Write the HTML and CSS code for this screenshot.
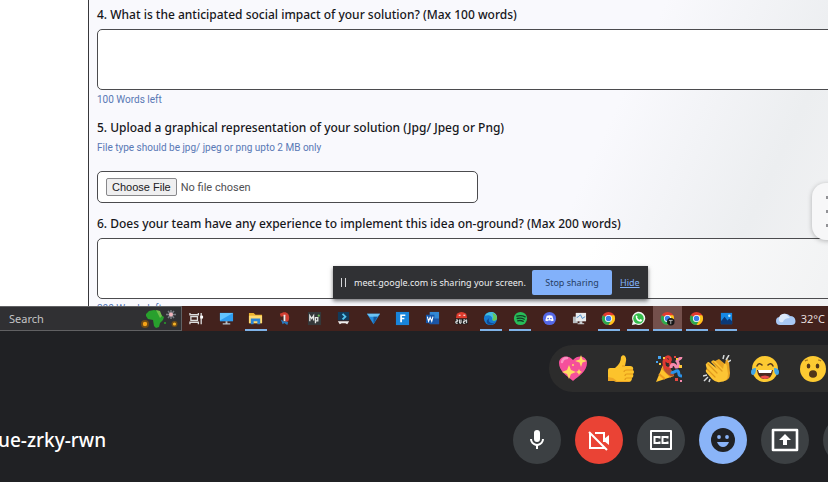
FILE: index.html
```html
<!DOCTYPE html>
<html lang="en">
<head>
<meta charset="utf-8">
<title>Meeting</title>
<link rel="stylesheet" href="styles.css">
</head>
<body>
<svg class="defs" aria-hidden="true">
  <defs>
    <g id="chrome">
      <circle cx="8" cy="8" r="7" fill="#e33b2e"/>
      <path d="M8 8 1.9 4.5A7 7 0 0 0 8 15l3-5z" fill="#2da94f"/>
      <path d="M8 15a7 7 0 0 0 6.1-10.4H8l3.1 5.2z" fill="#fdc61b"/>
      <circle cx="8" cy="8" r="3.8" fill="#fff"/><circle cx="8" cy="8" r="2.9" fill="#3b7de8"/>
    </g>
  </defs>
</svg>
<main class="meeting">
  <section class="shared">
    <div class="page">
      <form class="form">
        <label class="question" for="impact">4. What is the anticipated social impact of your solution? (Max 100 words)</label>
        <textarea class="answer" id="impact"></textarea>
        <p class="hint">100 Words left</p>
        <label class="question next" for="upload">5. Upload a graphical representation of your solution (Jpg/ Jpeg or Png)</label>
        <p class="hint">File type should be jpg/ jpeg or png upto 2 MB only</p>
        <input class="upload" id="upload" type="file">
        <label class="question" for="experience">6. Does your team have any experience to implement this idea on-ground? (Max 200 words)</label>
        <textarea class="answer" id="experience"></textarea>
        <p class="hint">200 Words left</p>
      </form>
      <aside class="floating"><i></i><i></i><i></i></aside>
      <div class="sharing">
        <span class="pause"></span>
        <span class="sharing-text">meet.google.com is sharing your screen.</span>
        <button class="stop" type="button">Stop sharing</button>
        <a class="hide" href="#">Hide</a>
      </div>
    </div>
    <div class="taskbar">
      <div class="search">
        <span>Search</span>
        <svg class="africa" viewBox="0 0 38 20" aria-hidden="true">
          <circle cx="4" cy="15" r="4" fill="#6f4b16"/><circle cx="4" cy="15" r="2.2" fill="#f5a318"/>
          <path d="M5 5 8 2l5-1 5 1 2 4 3 2-1 3-3 3-1 4-3 1-2-2-1-6-5-1-2-3z" fill="#28a02d"/>
          <path d="m15 1 4 1 2 5-2 2-2-4z" fill="#6fbd4b"/>
          <path d="M30 1v9M25 5.500h10M27 2l6 7M33 2l-6 7" stroke="#777b83" stroke-width="1.500"/><circle cx="30" cy="5.500" r="2" fill="#f2b6bd"/>
          <circle cx="33.500" cy="15" r="3" fill="#6f4b16"/><circle cx="33.500" cy="15" r="1.600" fill="#f5b42a"/><circle cx="24" cy="14" r="1" fill="#28a02d"/>
        </svg>
      </div>
      <nav class="apps" aria-label="Apps">
        <span class="app"><svg viewBox="0 0 16 16"><path d="M1 2v2h9V2M1 14v-2h9v2M2 6h7v4H2zM13 2v12" fill="none" stroke="#ddd" stroke-width="1.400"/><path d="M12 5h3v3h-3z" fill="#fff"/></svg></span>
        <span class="app"><svg viewBox="0 0 16 16"><path d="M1 2h14v9H1z" fill="#2e9df0"/><path d="M1 2h14L1 10z" fill="#63c5ff"/><path d="M7 11h2v2h3v1.500H4V13h3z" fill="#b5c2cc"/></svg></span>
        <span class="app open"><svg viewBox="0 0 16 16"><path d="M1 2h5l2 2h7v9H1z" fill="#eab12e"/><path d="M1 5h14v8H1z" fill="#ffda70"/><path d="M3 14V8h10v6h-3v-3H6v3z" fill="#2c83d4"/></svg></span>
        <span class="app"><svg viewBox="0 0 16 16"><path d="M3 3c8-5 12 2 9 8l-3 1V5L4 6z" fill="#cf3d31"/><path d="M8 4v7" stroke="#eee" stroke-width="2"/><path d="m4 9 5 3-3 2zM9 11l3 1-1 3-3-2z" fill="#2878bd"/></svg></span>
        <span class="app"><svg viewBox="0 0 16 16"><path d="M1 1h14v14H1z" fill="#35383a"/><path d="M3 11V5l2 3 2-3v5M9 13V7h2.500v3.500H9" fill="none" stroke="#e5e8e5" stroke-width="1.400"/><circle cx="12.500" cy="5" r="1.200" fill="#63b758"/></svg></span>
        <span class="app"><svg viewBox="0 0 16 16"><path d="M2 1h12v9H2z" fill="#123b5b"/><path d="m7 3 3 3-3 3" fill="none" stroke="#55c4ee" stroke-width="2"/><path d="M2 11h12l-2 3-2-1H6l-2 1z" fill="#eee"/></svg></span>
        <span class="app"><svg viewBox="0 0 16 16"><path d="M1 3h14L8 14z" fill="#248ddd"/><path d="M1 3h14l-3 3H4z" fill="#6cc3f3"/><path d="m8 6 4 0-4 8z" fill="#14599d"/></svg></span>
        <span class="app"><svg viewBox="0 0 16 16"><path d="M1 1h14v14H1z" fill="#1984da"/><path d="M6.500 12V4.500H11M6.500 8H10" fill="none" stroke="#fff" stroke-width="1.800"/></svg></span>
        <span class="app"><svg viewBox="0 0 16 16"><path d="M5 1h10v13H5z" fill="#3287d4"/><path d="M5 8h10v6H5z" fill="#1d55a4"/><path d="M1 4h9v9H1z" fill="#1555aa"/><path d="m2.500 6 1.300 5L5.500 7l1.700 4 1.300-5" fill="none" stroke="#fff" stroke-width="1.200"/></svg></span>
        <span class="app"><svg viewBox="0 0 16 16"><path d="M3 3q5-4 10 0l1 5H2z" fill="#dd3b2d"/><path d="M5 4h2v1H5zM10 4h2v1h-2z" fill="#fff"/><path d="M1 8h14v6H1z" fill="#191919"/><path d="M2 9.500h2V11H2v2h2M6 9v4h1.500V9M10 9.500h2V11h-2v2h2M13.500 9v4" fill="none" stroke="#fff"/></svg></span>
        <span class="app open"><svg viewBox="0 0 16 16"><circle cx="8" cy="8" r="7" fill="#167bd1"/><path d="M2 5c3-6 13-5 13 2 0 4-5 4-5 2 0-5-5-5-8-4" fill="#43bfe0"/><path d="M10 2c4 1 5 4 5 6-1 3-5 3-5 1 2-2 1-4 0-7" fill="#67c957"/><path d="M7 7c-3 4 2 8 6 5-3 4-10 3-9-2z" fill="#134993"/></svg></span>
        <span class="app open"><svg viewBox="0 0 16 16"><circle cx="8" cy="8" r="7" fill="#28bd59"/><path d="M4 5.500q5-1.500 9 .8M4.500 8q4-1.200 7.500.8M5 10.500q3-1 6 .5" fill="none" stroke="#143e24" stroke-width="1.400" stroke-linecap="round"/></svg></span>
        <span class="app"><svg viewBox="0 0 16 16"><circle cx="8" cy="8" r="7" fill="#5468e7"/><path d="M5 5q3-1 6 0l1.500 5-2 1-1-1h-3l-1 1-2-1z" fill="#fff"/><circle cx="6.500" cy="8" r=".9" fill="#5468e7"/><circle cx="9.500" cy="8" r=".9" fill="#5468e7"/></svg></span>
        <span class="app"><svg viewBox="0 0 16 16"><path d="M1 6h5v7H1z" fill="#b7bcc0"/><path d="M4 2h11v9H4z" fill="#e8ebed"/><path d="m5 7 2-1 2-2 2 4 3-2" fill="none" stroke="#4a8ccb"/><path d="M8 11h3v2h2v1H6v-1h2z" fill="#ccd0d4"/></svg></span>
        <span class="app open"><svg viewBox="0 0 16 16"><use href="#chrome"/></svg></span>
        <span class="app open"><svg viewBox="0 0 16 16"><path d="m1 15 1-4a7 7 0 1 1 3 3z" fill="#f4f7f4"/><circle cx="8" cy="8" r="5.600" fill="#35bd4b"/><path d="M5 5q1-1 2 1L6.500 7q1 2 2.500 2.500l1-1 2 1q-1 3-4 1.500T5 5" fill="#fff"/></svg></span>
        <span class="app open active"><svg viewBox="0 0 16 16"><use href="#chrome"/><circle cx="11.500" cy="11.500" r="4" fill="#171717"/><path d="M9.500 10h4M11.500 10v4" stroke="#bbb"/></svg></span>
        <span class="app open"><svg viewBox="0 0 16 16"><use href="#chrome"/></svg></span>
        <span class="app open"><svg viewBox="0 0 16 16"><path d="M2 2h12v12H2z" fill="#1688e4"/><path d="m2 11 4-5 3 4 2-2 3 3v3H2z" fill="#0b3978"/><circle cx="11" cy="5" r="1.300" fill="#bceaff"/></svg></span>
      </nav>
      <div class="weather">
        <svg viewBox="0 0 20 14" aria-hidden="true"><path d="M4 13a4 4 0 0 1 0-8 6 6 0 0 1 10-1q5 0 5.500 5 0 4-4 4z" fill="#a9c8f4"/><path d="M3 6a5 5 0 0 1 9-2l2 2q-6 0-7 4-5 1-4-4" fill="#dce9fb"/></svg>
        <span>32°C</span>
      </div>
    </div>
  </section>
  <section class="call">
    <div class="reactions">
      <button type="button" aria-label="Sparkling heart"><svg viewBox="0 0 28 28"><path d="M14 26C8 21 0 16 0 8 0 1 9-1 14 5c5-6 14-4 14 3 0 8-8 13-14 18" fill="#f5509b"/><path d="M3 7q1-4 5-4" fill="none" stroke="#fb91c2" stroke-width="2.500" stroke-linecap="round"/><path d="m22 0 1.500 4.500L28 6l-4.500 1.500L22 12l-1.500-4.500L16 6l4.500-1.500zM10 10l2 5 5 2-5 2-2 5-2-5-5-2 5-2zM20 14l1 2 2 1-2 1-1 2-1-2-2-1 2-1z" fill="#ffdc62"/><circle cx="14" cy="10" r="1" fill="#ffdc62"/></svg></button>
      <button type="button" aria-label="Thumbs up"><svg viewBox="0 0 28 28"><path d="M1 15q0-2 2-2h5c4-3 6-7 6-11 2-4 6-1 5 4l-1 5h5q4 0 3 4 2 2 0 4 1 3-1 4 0 4-4 4H10l-3-1H1z" fill="#fcc32c"/><path d="M18 11h-3M26 15h-6q-3 0-3 2M26 19h-6q-2 0-2 2M25 23h-5q-2 0-2 2" fill="none" stroke="#e39a1a" stroke-width="1.200"/><path d="M1 22v4h6l3 1h11l3-1H10l-4-3z" fill="#eda524"/></svg></button>
      <button type="button" aria-label="Party popper"><svg viewBox="0 0 28 28"><path d="m1 27 7-17q8 3 11 11z" fill="#ffc42d"/><path d="m7 13 9 9M4 19l6 5" stroke="#ed9a20" stroke-width="2"/><ellipse cx="13.500" cy="16" rx="3" ry="7" transform="rotate(-45 13.500 16)" fill="#ae5131"/><path d="M11 14c-5-8 1-15 4-11 2 4-4 5-3 1M12 14c4-1 6-5 2-6" fill="none" stroke="#df3932" stroke-width="3"/><path d="M16 13c0-5 4-4 5-1 4 1 2-5 1-6 1-3 4-1 4-4" fill="none" stroke="#f48aae" stroke-width="3"/><path d="M16 17c3 2 4-2 7-1 2 2-1 5 4 5" fill="none" stroke="#2a91e8" stroke-width="3"/><path d="M3 1h3v3H3zM1 6h2v2H1z" fill="#45a3ef"/><path d="M8 2h2v2H8zM21 3h2v2h-2zM24 10h3v3h-3zM4 8h2v2H4z" fill="#ffc83a"/><path d="M20 23h3v3h-3zM19 1h2v2h-2z" fill="#e44940"/><path d="M25 25h2v2h-2z" fill="#f48aae"/></svg></button>
      <button type="button" aria-label="Clapping hands"><svg viewBox="0 0 28 28"><path d="m10 7 6-3 6 5 1-5q3 0 3 3l1 11q0 8-7 8z" fill="#e8a323"/><path d="M4 8q1-2 3 0l9 7-8-8q2-3 4-1l8 8 1-5q3-1 3 4l1 6q0 8-8 8-4 1-8-3l-6-7q-1-2 1-3l-1-3q-1-2 1-3" fill="#fcc434"/><path d="m5 9 9 9M4 14l8 8M10 7l9 9" stroke="#df981d" stroke-width="1.200" stroke-linecap="round"/><path d="m20 4 1-4M23 5l3-5M25 7l3-2M0 21l4-1M1 26l4-4M6 27l1-3" stroke="#d5d8d9" stroke-width="1.500"/></svg></button>
      <button type="button" aria-label="Tears of joy"><svg viewBox="0 0 28 28"><circle cx="14" cy="14" r="13" fill="#fdca32"/><path d="M6 15h16q-1 9-8 9t-8-9" fill="#4b291f"/><path d="M7 15h14l-1 3H8z" fill="#fff"/><path d="M9 22q5-3 10 0-5 4-10 0" fill="#ed4d48"/><path d="M6 11q2-4 5-1M22 11q-2-4-5-1" fill="none" stroke="#593b1d" stroke-width="1.600" stroke-linecap="round"/><path d="M0 17q0-4 5-4 0 7-3 7-2 0-2-3M28 17q0-4-5-4 0 7 3 7 2 0 2-3" fill="#42a6e8"/></svg></button>
      <button type="button" aria-label="Surprised"><svg viewBox="0 0 28 28"><circle cx="14" cy="14" r="13" fill="#fdca32"/><ellipse cx="9.500" cy="11" rx="1.800" ry="2.600" fill="#513519"/><ellipse cx="18.500" cy="11" rx="1.800" ry="2.600" fill="#513519"/><ellipse cx="14" cy="19" rx="4" ry="3.800" fill="#513519"/><path d="M6 6q1-1 3-1M19 5q2 0 3 1" fill="none" stroke="#a16f1c" stroke-width="1.200"/></svg></button>
    </div>
    <div class="bar">
      <h1 class="code">ue-zrky-rwn</h1>
      <div class="controls">
        <button class="control" type="button" aria-label="Microphone"><svg viewBox="0 0 24 24"><path d="M12 14a3 3 0 0 0 3-3V5a3 3 0 0 0-6 0v6a3 3 0 0 0 3 3m5-3a5 5 0 0 1-10 0H5a7 7 0 0 0 6 6.900V21h2v-3.100A7 7 0 0 0 19 11z"/></svg></button>
        <button class="control off" type="button" aria-label="Camera"><svg viewBox="0 0 24 24"><path d="M3 5v15h15M8 5h9v9M2 4l18 18" fill="none" stroke="#fff" stroke-width="2"/><path d="m17 11 5-4v10l-5-4z"/><path d="m4 3 18 18" stroke="#ea4335" stroke-width="1"/></svg></button>
        <button class="control" type="button" aria-label="Captions"><svg viewBox="0 0 24 24"><path d="M2 3h20v18H2z" fill="none" stroke="#fff" stroke-width="2" stroke-linejoin="round"/><path d="M10.500 10.500V9h-5v6h5v-1.500M18.500 10.500V9h-5v6h5v-1.500" fill="none" stroke="#fff" stroke-width="2"/></svg></button>
        <button class="control on" type="button" aria-label="Reactions"><svg viewBox="0 0 24 24"><circle cx="12" cy="12" r="12" fill="#202124"/><g fill="#8ab4f8"><circle cx="8" cy="9" r="1.900"/><circle cx="16" cy="9" r="1.900"/><path d="M6 14h12q-2 5-6 5t-6-5"/></g></svg></button>
        <button class="control" type="button" aria-label="Present"><svg class="wide" viewBox="0 0 28 24"><path d="M2 2h24v20H2z" fill="none" stroke="#fff" stroke-width="2.600" stroke-linejoin="round"/><path d="m14 6 6 6h-4v5h-4v-5H8z"/></svg></button>
        <button class="control" type="button" aria-label="More"></button>
      </div>
    </div>
  </section>
</main>
</body>
</html>
```
FILE: styles.css
```css
* { box-sizing: border-box; }

body {
  margin: 0;
  background: #202124;
  font-family: "Noto Sans", sans-serif;
}

button { border: 0; padding: 0; font: inherit; }
p, h1 { margin: 0; }
.defs { position: absolute; width: 0; height: 0; }

.meeting {
  display: flex;
  flex-direction: column;
  min-height: 100vh;
  overflow: hidden;
}

/* Shared screen */
.page {
  position: relative;
  height: 306px;
  padding-left: 88px;
  overflow: hidden;
  background: #fff;
}

.form {
  display: flex;
  flex-direction: column;
  padding: 5px 0 0 8px;
  border-left: 1px solid #37373b;
  background: linear-gradient(115deg, #f9f9fd 65%, #eceef0 86%, #f3f3f4);
}

.question {
  color: #17171b;
  font: 500 12px/20px "Noto Sans", sans-serif;
  white-space: nowrap;
}
.question.next { margin-top: 8px; }

.answer {
  height: 61px;
  margin: 4px -8px 0 0;
  border: 1px solid #4b4b4e;
  border-radius: 5px;
  background: #fff;
  resize: none;
}
#experience { background: linear-gradient(115deg, #fff 65%, #f1f2f3); }

.hint {
  color: #5878b5;
  font: 10px/20px Roboto, sans-serif;
}

.upload {
  width: 381px;
  height: 32px;
  margin: 13px 0 11px;
  padding: 6px 8px;
  border: 1px solid #4b4b4e;
  border-radius: 5px;
  background: #fff;
  color: #505053;
  font: 11px/18px Roboto, sans-serif;
}
.upload::file-selector-button {
  height: 18px;
  margin-right: 4px;
  padding: 0 5px;
  border: 1px solid #88888b;
  border-radius: 2px;
  background: #efeff0;
  color: #202023;
  font: 11px/16px "Liberation Sans", sans-serif;
}

.floating {
  position: absolute;
  top: 183px;
  right: -42px;
  display: flex;
  flex-direction: column;
  gap: 11px;
  width: 58px;
  height: 57px;
  padding: 13px 0 0 14px;
  border-radius: 14px;
  background: #f7f7f8;
  box-shadow: 0 1px 5px #0004;
}
.floating i { width: 8px; height: 3px; background: #929296; }

.sharing {
  position: absolute;
  bottom: 7px;
  left: 333px;
  display: flex;
  align-items: center;
  width: 315px;
  height: 33px;
  padding: 0 8px;
  background: #303134;
  color: #edeef0;
  font-size: 9px;
  box-shadow: 0 2px 4px #0008;
}
.pause {
  width: 5px;
  height: 9px;
  border: solid #d5d6d8;
  border-width: 0 1px;
}
.sharing-text { flex: 1; margin-left: 8px; white-space: nowrap; }
.stop {
  width: 80px;
  height: 25px;
  margin-right: 8px;
  border-radius: 2px;
  background: #82b1fa;
  color: #263e65;
}
.hide { width: 20px; color: #82b1fa; }

/* Taskbar */
.taskbar {
  display: grid;
  grid-template-columns: 182px minmax(0, 559px) 1fr;
  height: 25px;
  background: #43221d;
}
.search {
  display: flex;
  align-items: center;
  justify-content: space-between;
  padding: 0 2px 0 9px;
  border: solid #616163;
  border-width: 1px 1px 1px 0;
  background: #303033;
  color: #c4c4c6;
  font-size: 11px;
}
.africa { width: 38px; height: 20px; }
.apps { display: grid; grid-template-columns: repeat(19, 1fr); }
.app { display: grid; place-items: center; }
.app svg { width: 15px; height: 15px; }
.open {
  background: linear-gradient(#7eb2e7, #7eb2e7) bottom / 22px 2px no-repeat;
}
.active {
  background: linear-gradient(#7eb2e7, #7eb2e7) bottom / 100% 2px no-repeat #74504c;
}
.weather {
  display: flex;
  align-items: center;
  justify-content: flex-end;
  gap: 5px;
  padding-right: 3px;
  color: #e4dddd;
  font-size: 11px;
}
.weather svg { width: 20px; height: 14px; }

/* Call area */
.call {
  display: flex;
  flex: 1;
  flex-direction: column;
  padding-top: 14px;
}
.reactions {
  display: flex;
  align-self: flex-end;
  gap: 20px;
  width: 279px;
  height: 47px;
  padding-left: 10px;
  overflow: hidden;
  border-radius: 24px 0 0 24px;
  background: #2c2c2c;
}
.reactions button {
  display: grid;
  flex: 0 0 28px;
  place-items: center;
  background: none;
}
.reactions svg { width: 28px; height: 28px; }

.bar {
  display: flex;
  align-items: center;
  justify-content: space-between;
  margin-top: 24px;
}
.code {
  margin-left: -2px;
  color: #fff;
  font: 500 19px/24px "Noto Sans", sans-serif;
}
.controls {
  display: flex;
  gap: 14px;
  width: 315px;
  overflow: hidden;
}
.control {
  display: grid;
  flex: 0 0 48px;
  height: 48px;
  place-items: center;
  border-radius: 50%;
  background: #3c4043;
  fill: #fff;
}
.control svg { width: 24px; height: 24px; }
.control .wide { width: 28px; }
.off { background: #ea4335; }
.on { background: #8ab4f8; }
```
